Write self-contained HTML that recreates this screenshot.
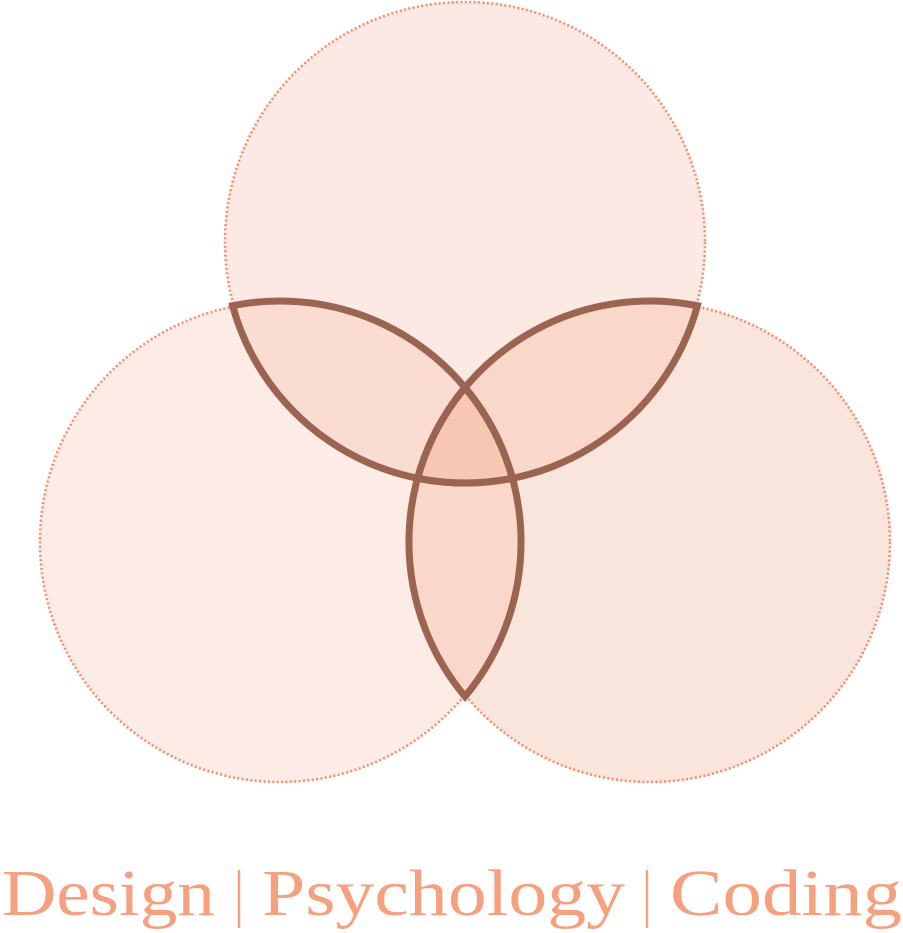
<!DOCTYPE html>
<html><head><meta charset="utf-8"><style>
html,body{margin:0;padding:0;background:#fff;width:903px;height:933px;overflow:hidden}
svg{display:block}
</style></head><body>
<svg width="903" height="933" viewBox="0 0 903 933" xmlns="http://www.w3.org/2000/svg">
<defs>
<clipPath id="c1"><circle cx="465" cy="242" r="241"/></clipPath>
<clipPath id="c2"><circle cx="280" cy="542" r="241"/></clipPath>
</defs>
<circle cx="465" cy="242" r="241" fill="#fde9e3"/>
<circle cx="280" cy="542" r="241" fill="#fdebe5"/>
<circle cx="650" cy="542" r="241" fill="#f9e5dc"/>
<path d="M232.6,305.7 A241,241 0 0 0 512.4,478.3 A241,241 0 0 0 232.6,305.7Z" fill="#fbdcd2"/>
<path d="M697.4,305.7 A241,241 0 0 1 417.6,478.3 A241,241 0 0 1 697.4,305.7Z" fill="#f9d7cb"/>
<path d="M465,387.5 A241,241 0 0 1 465,696.5 A241,241 0 0 1 465,387.5Z" fill="#f9d7cb"/>
<g clip-path="url(#c1)"><g clip-path="url(#c2)"><circle cx="650" cy="542" r="241" fill="#f8c7b4"/></g></g>
<g fill="none" stroke="#f08a68" stroke-width="2.6" stroke-dasharray="1.8 2.6">
<circle cx="465" cy="242" r="240"/>
<circle cx="280" cy="542" r="240"/>
<circle cx="650" cy="542" r="240"/>
</g>
<g fill="none" stroke="#9b6450" stroke-width="7" stroke-linejoin="miter">
<path d="M232.6,305.7 A241,241 0 0 0 512.4,478.3 A241,241 0 0 0 232.6,305.7Z"/>
<path d="M697.4,305.7 A241,241 0 0 1 417.6,478.3 A241,241 0 0 1 697.4,305.7Z"/>
<path d="M465,387.5 A241,241 0 0 1 465,696.5 A241,241 0 0 1 465,387.5Z"/>
</g>
<g font-family="Liberation Serif, serif" font-size="66" fill="#f6a07f">
<text x="2" y="915" textLength="213" lengthAdjust="spacingAndGlyphs">Design</text>
<text x="262" y="915" textLength="363" lengthAdjust="spacingAndGlyphs">Psychology</text>
<text x="670" y="915" textLength="232" lengthAdjust="spacingAndGlyphs">Coding</text>
</g>
<g stroke="#f6a07f" stroke-width="2.5">
<line x1="239" y1="870" x2="239" y2="928"/>
<line x1="647" y1="870" x2="647" y2="928"/>
</g>
</svg>
</body></html>
